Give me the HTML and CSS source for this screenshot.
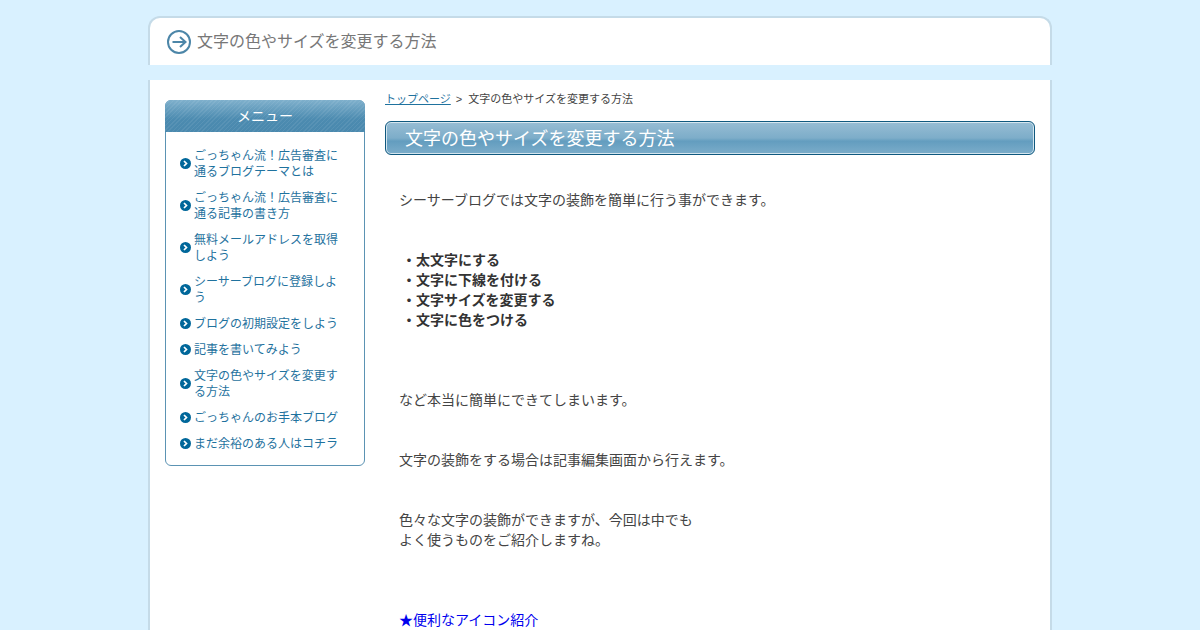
FILE: index.html
```html
<!DOCTYPE html>
<html lang="ja">
<head>
<meta charset="utf-8">
<title>文字の色やサイズを変更する方法</title>
<link rel="stylesheet" href="styles.css">
</head>
<body>
<svg class="defs" width="0" height="0" aria-hidden="true">
  <symbol id="bullet" viewBox="0 0 11 11">
    <circle cx="5.5" cy="5.5" r="5.5" fill="#00679a"/>
    <path d="M4 3l2.5 2.5L4 8" fill="none" stroke="#fff" stroke-width="1.7"/>
  </symbol>
</svg>
<div class="page">
  <header class="site-header">
    <svg class="header-icon" width="26" height="26" viewBox="0 0 26 26" aria-hidden="true">
      <circle cx="13" cy="13" r="11" fill="#fff" stroke="#4c86a8" stroke-width="2"/>
      <path d="M6.5 13H19M14 8l5.5 5-5.5 5" fill="none" stroke="#4c86a8" stroke-width="2"/>
    </svg>
    <h1 class="site-title">文字の色やサイズを変更する方法</h1>
  </header>
  <div class="band"></div>
  <div class="columns">
    <aside class="side">
      <div class="menu">
        <h2 class="menu-title">メニュー</h2>
        <ul class="menu-list">
          <li><svg class="bullet"><use href="#bullet"/></svg><a href="#">ごっちゃん流！広告審査に通るブログテーマとは</a></li>
          <li><svg class="bullet"><use href="#bullet"/></svg><a href="#">ごっちゃん流！広告審査に通る記事の書き方</a></li>
          <li><svg class="bullet"><use href="#bullet"/></svg><a href="#">無料メールアドレスを取得しよう</a></li>
          <li><svg class="bullet"><use href="#bullet"/></svg><a href="#">シーサーブログに登録しよう</a></li>
          <li><svg class="bullet"><use href="#bullet"/></svg><a href="#">ブログの初期設定をしよう</a></li>
          <li><svg class="bullet"><use href="#bullet"/></svg><a href="#">記事を書いてみよう</a></li>
          <li><svg class="bullet"><use href="#bullet"/></svg><a href="#">文字の色やサイズを変更する方法</a></li>
          <li><svg class="bullet"><use href="#bullet"/></svg><a href="#">ごっちゃんのお手本ブログ</a></li>
          <li><svg class="bullet"><use href="#bullet"/></svg><a href="#">まだ余裕のある人はコチラ</a></li>
        </ul>
      </div>
    </aside>
    <main class="main">
      <div class="crumb"><a href="#">トップページ</a><span class="sep">&gt;</span>文字の色やサイズを変更する方法</div>
      <h2 class="entry-title">文字の色やサイズを変更する方法</h2>
      <div class="entry">
        <p class="first">シーサーブログでは文字の装飾を簡単に行う事ができます。</p>
        <p class="gap-40 points"><strong>&nbsp;・太文字にする<br>&nbsp;・文字に下線を付ける<br>&nbsp;・文字サイズを変更する<br>&nbsp;・文字に色をつける</strong></p>
        <p class="gap-60">など本当に簡単にできてしまいます。</p>
        <p class="gap-40">文字の装飾をする場合は記事編集画面から行えます。</p>
        <p class="gap-40">色々な文字の装飾ができますが、今回は中でも<br>よく使うものをご紹介しますね。</p>
        <p class="gap-60"><a class="plain" href="#">★便利なアイコン紹介</a></p>
      </div>
    </main>
  </div>
</div>
</body>
</html>
```
FILE: styles.css
```css
* { box-sizing: border-box; }
html, body { margin: 0; padding: 0; height: 630px; overflow: hidden; }
body {
  background: #d9f1ff;
  font-family: "Liberation Sans", "Noto Sans CJK JP", sans-serif;
  color: #444;
  font-size: 14px;
}
.defs { display: block; height: 0; }
.page { width: 904px; margin: 0 auto; padding-top: 16px; }
.site-header {
  height: 49px;
  margin: 0;
  background: #fff;
  border: solid #c5dbe8;
  border-width: 2px 2px 0;
  border-radius: 12px 12px 0 0;
  display: flex;
  align-items: center;
  padding: 1px 0 0 16px;
  gap: 5px;
}
.header-icon { flex: none; }
.site-title { margin: 0; font-size: 16px; font-weight: normal; color: #777; line-height: 20px; }
.band { height: 15px; }
.columns {
  background: #fff;
  border: solid #c5dbe8;
  border-width: 0 2px;
  height: 550px;
  display: flex;
  padding: 0 15px;
  gap: 20px;
}
.side { width: 200px; flex: none; padding-top: 20px; }
.menu {
  border: 1px solid #5b93b3;
  border-radius: 6px;
  background: #fff;
  padding-bottom: 8px;
}
.menu-title {
  margin: -1px -1px 0;
  height: 32px;
  border-radius: 6px 6px 0 0;
  background:
    repeating-linear-gradient(135deg, rgba(255,255,255,.07) 0 1px, transparent 1px 3px),
    linear-gradient(#7fb0cc, #4c8bb0 60%, #4a89ae);
  color: #fff;
  font-size: 14px;
  font-weight: normal;
  line-height: 32px;
  text-align: center;
}
.menu-list { list-style: none; margin: 0; padding: 11px 24px 0 14px; }
.menu-list li { display: flex; align-items: center; gap: 3px; padding: 5px 0; font-size: 12px; line-height: 16px; }
.bullet { flex: none; width: 11px; height: 11px; margin-top: -1px; }
.menu-list a { color: #1f729e; text-decoration: none; }
.main { width: 650px; flex: none; padding-top: 12px; }
.crumb { font-size: 11px; line-height: 14px; color: #444; }
.crumb a { color: #1f729e; text-decoration: underline; }
.sep { margin: 0 6px 0 5px; }
.entry-title {
  margin: 15px 0 0;
  height: 34px;
  border: 1px solid #10597f;
  border-radius: 6px;
  box-shadow: inset 0 0 0 1px #d5e6ef;
  background: linear-gradient(#97bdd4, #7dadc9 50%, #639dbf 60%, #7cadca);
  color: #fff;
  font-size: 18px;
  font-weight: normal;
  line-height: 34px;
  padding-left: 19px;
}
.entry { padding: 35px 14px 0; line-height: 20px; font-size: 14px; color: #444; }
.entry p { margin: 0; }
.entry .gap-40 { margin-top: 40px; }
.entry .gap-60 { margin-top: 60px; }
.entry .points { margin-left: -1px; }
.entry strong { font-weight: bold; color: #333; }
.plain { color: #0000ee; text-decoration: none; }
```
